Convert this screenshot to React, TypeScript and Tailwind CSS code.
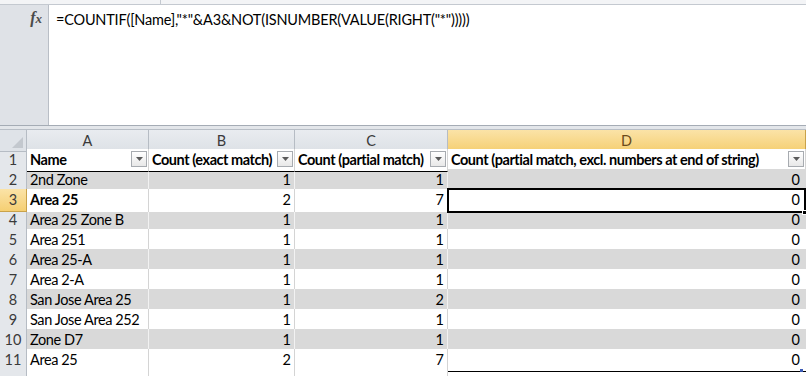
import React from "react";

const rows: [string, number, number, number][] = [
  ["2nd Zone", 1, 1, 0],
  ["Area 25", 2, 7, 0],
  ["Area 25 Zone B", 1, 1, 0],
  ["Area 251", 1, 1, 0],
  ["Area 25-A", 1, 1, 0],
  ["Area 2-A", 1, 1, 0],
  ["San Jose Area 25", 1, 2, 0],
  ["San Jose Area 252", 1, 1, 0],
  ["Zone D7", 1, 1, 0],
  ["Area 25", 2, 7, 0],
];

function FilterBtn() {
  return (
    <div className="absolute right-[1px] top-[2px] w-[16px] h-[16px] border border-[#a7abb0] bg-gradient-to-b from-[#ffffff] to-[#e8e8e8] flex items-center justify-center">
      <svg width="7" height="4" viewBox="0 0 7 4">
        <path d="M0 0 L7 0 L3.5 4 Z" fill="#5a5a5a" />
      </svg>
    </div>
  );
}

const cols = "grid grid-cols-[27px_122px_146px_153px_358px]";

export default function App() {
  return (
    <div
      className="w-[806px] h-[376px] overflow-hidden bg-[#e3e6ea] text-black"
      style={{ fontFamily: "Lato, 'Liberation Sans', sans-serif" }}
    >
      {/* top strip */}
      <div className="h-[5px] bg-[#f3f4f6] border-b border-[#c4c9d0] flex">
        <div className="w-[161px] border-r border-[#c4c9d0]" />
      </div>
      {/* formula bar */}
      <div className="flex h-[121px] border-b border-[#a5acb5]">
        <div className="w-[49px] bg-[#dfe2e7] border-r border-[#b9bec6] flex justify-end pr-[6px] pt-[5px]">
          <span
            className="italic font-bold text-[16px] text-[#4a4a4a] leading-none"
            style={{ fontFamily: "'Liberation Serif', serif" }}
          >
            f<span className="text-[13px]">x</span>
          </span>
        </div>
        <div className="flex-1 bg-white pl-[7px] pt-[5px] text-[14.5px] leading-[19px] tracking-[-0.2px]">
          =COUNTIF([Name],"*"&amp;A3&amp;NOT(ISNUMBER(VALUE(RIGHT("*")))))
        </div>
      </div>
      <div className="h-[3px]" />
      {/* column headers */}
      <div className={`${cols} h-[20px] border-t border-[#b8bec6] text-[14.5px] leading-[21px]`}>
        <div className="bg-[#dfe3e8] border-r border-b border-[#b6bcc4] relative overflow-hidden">
          <svg className="absolute right-[3px] bottom-[3px]" width="11" height="11" viewBox="0 0 11 11">
            <path d="M11 0 L11 11 L0 11 Z" fill="#c3c8ce" />
          </svg>
        </div>
        {["A", "B", "C"].map((c) => (
          <div key={c} className="bg-gradient-to-b from-[#e9ecf0] to-[#dde1e6] border-r border-b border-[#b6bcc4] text-center text-[#3a3a3a]">
            {c}
          </div>
        ))}
        <div className="bg-gradient-to-b from-[#fbe3a7] to-[#f5cf72] border-r border-b border-[#c9a24a] text-center text-[#6b4a1a]">
          D
        </div>
      </div>
      {/* row 1 */}
      <div className={`${cols} h-[20px] text-[14.5px] leading-[22px]`}>
        <div className="bg-[#e4e7eb] border-r border-b border-[#b6bcc4] text-center text-[#3a3a3a]">1</div>
        {["Name", "Count (exact match)", "Count (partial match)", "Count (partial match, excl. numbers at end of string)"].map((h) => (
          <div key={h} className="relative bg-white border-r border-[#d4d4d4] border-b border-b-black font-bold pl-[3px] whitespace-nowrap overflow-hidden tracking-[-0.45px]">
            {h}
            <FilterBtn />
          </div>
        ))}
      </div>
      {rows.map((r, i) => {
        const banded = i % 2 === 0;
        const sel = i === 1;
        const last = i === rows.length - 1;
        const bg = banded ? "bg-[#d9d9d9]" : "bg-white";
        const line = banded ? "border-[#f2f2f2]" : "border-[#d4d4d4]";
        const bottom = last ? "border-b border-b-black" : "";
        return (
          <div key={i} className={`${cols} h-[20px] text-[14.5px] leading-[22px] ${sel ? "relative z-10" : ""}`}>
            <div
              className={`${sel ? "bg-gradient-to-b from-[#fbe3a7] to-[#f5cf72] border-[#c9a24a]" : "bg-[#e4e7eb] border-[#b6bcc4]"} border-r border-b text-center text-[#3a3a3a]`}
            >
              {i + 2}
            </div>
            <div className={`${bg} border-r ${line} ${bottom} pl-[3px] whitespace-nowrap tracking-[-0.4px] ${sel ? "font-bold" : ""}`}>{r[0]}</div>
            <div className={`${bg} border-r ${line} ${bottom} text-right pr-[3px]`}>{r[1]}</div>
            <div className={`${bg} border-r ${line} ${bottom} text-right pr-[3px]`}>{r[2]}</div>
            <div className={`${bg} ${bottom} relative text-right pr-[6px]`}>
              {sel && (
                <>
                  <div className="absolute left-[-1px] top-[-1px] right-0 bottom-[-1px] border-2 border-black" />
                  <div className="absolute right-[-1px] bottom-[-3px] w-[5px] h-[5px] bg-black border border-white" />
                </>
              )}
              {r[3]}
              {last && <div className="absolute right-[3px] bottom-[-1px] w-[3px] h-[3px] bg-[#3b5bb5]" />}
            </div>
          </div>
        );
      })}
      <div className={`${cols} h-[20px]`}>
        <div className="bg-[#e4e7eb] border-r border-[#b6bcc4]" />
        <div className="bg-white border-r border-[#d4d4d4]" />
        <div className="bg-white border-r border-[#d4d4d4]" />
        <div className="bg-white border-r border-[#d4d4d4]" />
        <div className="bg-white" />
      </div>
    </div>
  );
}
